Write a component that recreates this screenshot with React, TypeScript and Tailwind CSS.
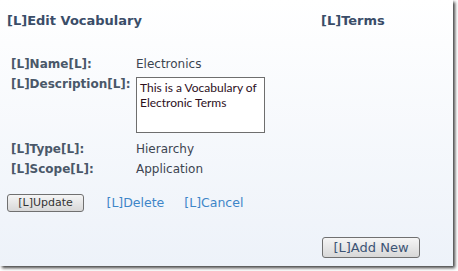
import React from "react";

const sans = { fontFamily: '"DejaVu Sans", Verdana, sans-serif' };

function Row({ label, children }: { label: string; children: React.ReactNode }) {
  return (
    <div className="flex h-[20px] items-start leading-[20px]">
      <div className="w-[129px] pl-[4px] font-bold text-[12px] text-[#4a5869]">{label}</div>
      <div className="text-[12px] text-[#3c4450]">{children}</div>
    </div>
  );
}

export default function App() {
  return (
    <div className="w-[458px] h-[271px] bg-white overflow-hidden" style={sans}>
      <div className="w-[453px] h-[266px] bg-linear-to-b from-[#ffffff] to-[#edf2f9] shadow-[2px_2px_3px_rgba(0,0,0,0.75)] flex pt-[13px] pb-[8px]">
        <div className="w-[321px] pl-[7px] flex flex-col">
          <div className="font-bold text-[13px] leading-[16px] text-[#3a4d68]">[L]Edit Vocabulary</div>
          <div className="mt-[24.5px] flex flex-col">
            <Row label="[L]Name[L]:">Electronics</Row>
            <div className="flex h-[59px] items-start">
              <div className="w-[129px] pl-[4px] font-bold text-[12px] leading-[20px] text-[#4a5869]">[L]Description[L]:</div>
              <textarea
                readOnly
                value={"This is a Vocabulary of Electronic Terms"}
                className="mt-[3px] w-[129px] h-[56px] border border-[#6e6e6e] bg-white resize-none overflow-hidden pl-[3px] pr-[2px] pt-[2px] text-[12px] leading-[15.3px] text-[#2d0f1c] outline-none"
                style={{ fontFamily: 'Lato, "Open Sans", sans-serif' }}
              />
            </div>
            <div className="mt-[6px]">
              <Row label="[L]Type[L]:">Hierarchy</Row>
            </div>
            <Row label="[L]Scope[L]:">Application</Row>
          </div>
          <div className="mt-[15px] flex items-center h-[18px]">
            <button className="w-[77px] h-[18px] border border-[#707070] rounded-[3px] bg-linear-to-b from-[#f5f5f5] to-[#d8d8d8] text-[11px] leading-[16px] text-[#333333] flex items-center justify-center">
              [L]Update
            </button>
            <span className="ml-[22.5px] text-[12.5px] leading-[18px] text-[#3e86c8]">[L]Delete</span>
            <span className="ml-[20px] text-[12.5px] leading-[18px] text-[#3e86c8]">[L]Cancel</span>
          </div>
        </div>
        <div className="flex flex-col">
          <div className="font-bold text-[13px] leading-[16px] text-[#3a4d68]">[L]Terms</div>
          <button className="mt-auto ml-[1px] w-[98px] h-[21px] border border-[#707070] rounded-[3px] bg-linear-to-b from-[#f5f5f5] to-[#d8d8d8] text-[13px] leading-[18px] text-[#3c5475] flex items-center justify-center">
            [L]Add New
          </button>
        </div>
      </div>
    </div>
  );
}
